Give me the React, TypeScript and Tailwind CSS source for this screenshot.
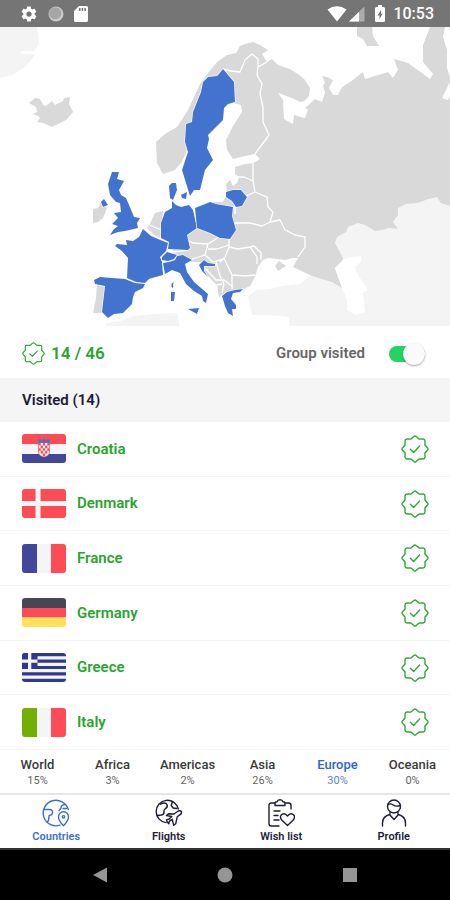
import { ReactNode, useState } from "react";

interface ICountry {
  name: string;
  flag: ReactNode;
}

interface IContinent {
  name: string;
  percent: number;
}

interface INavItem {
  label: string;
  icon: ReactNode;
}

/** flags are drawn on a 44x29 canvas */
const COUNTRIES: ICountry[] = [
  {
    name: "Croatia",
    flag: (
      <>
        <path fill="#ff4b55" d="M0 0h44v10H0z" />
        <path fill="#f5f5f5" d="M0 10h44v10H0z" />
        <path fill="#41479b" d="M0 20h44v9H0z" />
        <path fill="#f5f5f5" d="M16.500 8h11v10q0 4-5.500 5-5.500-1-5.500-5z" />
        <path
          fill="#ff4b55"
          d="M16.500 9h2.200v2.600h-2.200zM20.900 9h2.200v2.600h-2.200zM25.300 9h2.200v2.600h-2.200zM18.700 11.600h2.200v2.600h-2.200zM23.100 11.600h2.200v2.600h-2.200zM16.500 14.200h2.200v2.600h-2.200zM20.900 14.200h2.200v2.600h-2.200zM25.300 14.200h2.200v2.600h-2.200zM18.700 16.800h2.200v2.600h-2.200zM23.100 16.800h2.200v2.600h-2.200zM20.900 19.400h2.200V22h-2.200z"
        />
        <path
          fill="none"
          stroke="#ff4b55"
          strokeWidth=".7"
          d="M16.500 8v10q0 4 5.500 5 5.500-1 5.500-5V8"
        />
        <path fill="#5b6fb5" d="M15.500 6l2.500-1 2 1 2-1.200L24 6l2-1 2.500 1-.8 3H16.300z" />
      </>
    ),
  },
  {
    name: "Denmark",
    flag: (
      <>
        <path fill="#ff4b55" d="M0 0h44v29H0z" />
        <path fill="#f5f5f5" d="M13.500 0h5v12H44v5H18.500v12h-5V17H0v-5h13.500z" />
      </>
    ),
  },
  {
    name: "France",
    flag: (
      <>
        <path fill="#41479b" d="M0 0h15v29H0z" />
        <path fill="#f5f5f5" d="M15 0h14v29H15z" />
        <path fill="#ff4b55" d="M29 0h15v29H29z" />
      </>
    ),
  },
  {
    name: "Germany",
    flag: (
      <>
        <path fill="#464655" d="M0 0h44v10H0z" />
        <path fill="#ff4b55" d="M0 10h44v9.500H0z" />
        <path fill="#ffe15a" d="M0 19.500h44V29H0z" />
      </>
    ),
  },
  {
    name: "Greece",
    flag: (
      <>
        <path fill="#f5f5f5" d="M0 0h44v29H0z" />
        <path
          fill="#30388f"
          d="M0 0h44v3.200H0zM0 6.400h44v3.300H0zM0 12.900h44v3.200H0zM0 19.300h44v3.200H0zM0 25.800h44V29H0z"
        />
        <path fill="#30388f" d="M0 0h15.500v16.100H0z" />
        <path fill="#f5f5f5" d="M6 0h3.300v6.400h6.200v3.300H9.300v6.400H6V9.700H0V6.400h6z" />
      </>
    ),
  },
  {
    name: "Italy",
    flag: (
      <>
        <path fill="#73af00" d="M0 0h15v29H0z" />
        <path fill="#f5f5f5" d="M15 0h14v29H15z" />
        <path fill="#ff4b55" d="M29 0h15v29H29z" />
      </>
    ),
  },
];

const CONTINENTS: IContinent[] = [
  { name: "World", percent: 15 },
  { name: "Africa", percent: 3 },
  { name: "Americas", percent: 2 },
  { name: "Asia", percent: 26 },
  { name: "Europe", percent: 30 },
  { name: "Oceania", percent: 0 },
];

const NAV_ITEMS: INavItem[] = [
  {
    label: "Countries",
    icon: (
      <>
        <path d="M26.300 10.500A12.800 12.800 0 1 0 18 26.200M23.500 5.600a12.800 12.800 0 0 1 2.300 3.400" />
        <path d="M2 10.500h5.500q3.500.2 3 3.500-.4 2-2.500 2.300-1.500.4-1.200 2.200.4 3.200-1.800 4.500" />
        <path d="M23 5.500q-4 .2-4 3.500l-2 2.500M21 9.500h3.500" />
        <path d="M21.500 26.800q-5-5-5-9a5 5 0 0 1 10 0q0 4-5 9z" />
        <circle cx="21.500" cy="17.800" r="1.200" />
      </>
    ),
  },
  {
    label: "Flights",
    icon: (
      <>
        <path d="M11 23.600A11.200 11.200 0 1 1 23.300 10" />
        <path d="M5.500 5.200q5-2.500 6.500.3 1.200 2.500-2 4.500-1.500 1-1 3 .3 2.500-2.500 3l-4.300.5M17.500 2.500l-1.300 4 2 2.500 3.500.5" />
        <path d="M11.500 16.500l2-1.800 5.500.3 4.300-3q2.500-.6 3.200.6.500 1.700-1.500 3l-2.800 2.200-1.500 7-2 1.500-1.500-6-3 2-.3 2.500-1.500-1.500-1-2.500 2.800-.8 2.600-2.500z" />
      </>
    ),
  },
  {
    label: "Wish list",
    icon: (
      <>
        <path d="M8 4H4.500Q2 4 2 6.500v18Q2 27 4.500 27H12M18 4h3.500Q24 4 24 6.500V10" />
        <path d="M8 6.500V4q0-1.200 2-1.200.5-2 3-2t3 2q2 0 2 1.200v2.500z" />
        <path d="M7 12h6M7 16.500h4M7 21h5" />
        <path d="M20.500 26.500l-6-5.700q-2.200-3 .2-5.300 3.200-2 5.800 1.500 2.600-3.500 5.800-1.500 2.400 2.300.2 5.300z" />
      </>
    ),
  },
  {
    label: "Profile",
    icon: (
      <>
        <circle cx="14" cy="7.500" r="6.500" />
        <path d="M7.700 5.500q3-1.500 5.500.5 3 2 7.200.5" />
        <path d="M2.500 27v-3q0-6.500 7-8.500l4.500 5 4.500-5q7 2 7 8.500v3M10 16v-2.500M18 16v-2.500" />
      </>
    ),
  },
];

interface IBadgeProps {
  className: string;
}

const VisitedBadge = ({ className }: IBadgeProps) => (
  <svg
    viewBox="0 0 24 24"
    fill="none"
    stroke="currentColor"
    strokeWidth="1.200"
    strokeLinecap="round"
    strokeLinejoin="round"
    className={className}
    aria-hidden="true"
  >
    <path d="M8.500 3.500L11.100 1.200Q12 .5 12.900 1.200L15.500 3.500 18.900 3.400Q20.500 3.500 20.600 5.100L20.500 8.500 22.800 11.100Q23.500 12 22.800 12.900L20.500 15.500 20.600 18.900Q20.500 20.500 18.900 20.600L15.500 20.500 12.900 22.800Q12 23.500 11.100 22.800L8.500 20.500 5.100 20.600Q3.500 20.500 3.400 18.900L3.500 15.500 1.200 12.900Q.5 12 1.200 11.100L3.500 8.500 3.400 5.100Q3.500 3.500 5.100 3.400z" />
    <path d="M8 12.300l2.800 2.700L16 9.500" />
  </svg>
);

const StatusBar = () => (
  <header className="flex h-[27px] items-center justify-between bg-[#757575] pl-5 pr-4 text-white">
    <div className="flex items-center gap-2.5">
      <svg viewBox="0 0 24 24" className="size-[18px]" fill="currentColor">
        <path d="M19.400 13c.1-.3.100-.6.100-1s0-.7-.1-1l2.100-1.700c.2-.1.200-.4.100-.6l-2-3.500c-.1-.2-.4-.3-.6-.2l-2.500 1c-.5-.4-1.100-.7-1.700-1l-.4-2.600c0-.2-.2-.4-.5-.4h-4c-.2 0-.5.200-.5.400L9 5c-.6.300-1.200.600-1.700 1l-2.500-1c-.2-.1-.5 0-.6.200l-2 3.500c-.1.200-.1.500.1.600L4.500 11c0 .3-.1.700-.1 1s0 .7.100 1l-2.100 1.700c-.2.100-.2.400-.1.600l2 3.500c.1.200.4.300.6.200l2.500-1c.5.400 1.100.7 1.700 1l.4 2.600c0 .2.200.4.500.4h4c.2 0 .5-.2.500-.4l.4-2.600c.6-.3 1.200-.6 1.700-1l2.500 1c.2.100.5 0 .6-.2l2-3.500c.1-.2.100-.5-.1-.6zM12 15.500a3.500 3.500 0 1 1 0-7 3.500 3.500 0 0 1 0 7z" />
      </svg>
      <svg viewBox="0 0 16 16" className="size-4">
        <circle cx="8" cy="8" r="7.500" fill="#c9c9c9" />
        <circle cx="7.200" cy="7.200" r="6" fill="#a6a6a6" />
      </svg>
      <svg viewBox="0 0 14 16" className="h-4 w-3.5" fill="currentColor">
        <path
          fillRule="evenodd"
          d="M5 0h7.500Q14 0 14 1.500v13q0 1.500-1.500 1.500h-11Q0 16 0 14.500V5zM5 2v3h1.500V2zm2.700 0v3h1.500V2zm2.700 0v3h1.500V2z"
        />
      </svg>
    </div>
    <div className="flex items-center">
      <svg viewBox="0 0 20 16" className="h-4 w-5" fill="currentColor">
        <path d="M10 15.500L.5 3.500Q10-3 19.500 3.500z" />
      </svg>
      <svg viewBox="0 0 16 16" className="ml-0.5 size-4" fill="currentColor">
        <path opacity=".4" d="M15.500.5v15H0z" />
        <path d="M10 6v9.500H0z" />
      </svg>
      <svg viewBox="0 0 10 17" className="ml-2.5 h-[17px] w-2.5" fill="currentColor">
        <path
          fillRule="evenodd"
          d="M3 0h4v2h1.500Q10 2 10 3.500v12Q10 17 8.500 17h-7Q0 17 0 15.500v-12Q0 2 1.500 2H3zM6 5L2.500 10.500h2V14L7.700 8.700H6z"
        />
      </svg>
      <span className="ml-2 text-base font-medium">10:53</span>
    </div>
  </header>
);

const EuropeMap = () => (
  <svg
    viewBox="0 27 450 300"
    className="block h-auto w-full"
    role="img"
    aria-label="Visited countries in Europe"
  >
    {/* land outside of the continent */}
    <g fill="#f4f4f4">
      <path d="M0 27H37L39 43 34 51 21 51V54H36L25 67 12 75 0 78z" />
      <path d="M106 323L120 321 133 316 155 314 177 313 180 326H106z" />
      <path d="M248 297L256 290 270 289 282 286 300 284 312 274 335 240 345 222 390 215 400 200 450 190V326H289V317L270 315 252 315z" />
    </g>

    {/* mainland */}
    <g fill="#d9d9d9">
      <path d="M156 142L165 134 177 127 188 110 200 84 208 73 217 62 227 55 236 53 240 46 245 44 253 42 260 45 268 50 262 54 267 62 272 59 278 65 290 69 298 74 305 80 310 88 309 96 304 101 300 102 292 98 278 93 283 100 284 119 293 124 294 115 305 118 308 110 305 108 315 99 322 102 325 93 323 86 325 82 322 76 327 77 333 80 329 88 333 95 338 95 342 87 350 82 363 72 365 79 385 73 388 72 393 78 398 70 394 59 408 63 430 79 433 74 423 62 423 45 430 27H445L443 37 447 50 447 68 450 78V82L442 98 448 100 450 97V206L441 203 437 197 428 199 418 203 406 204 398 208 398 215 393 222 398 229 388 228 382 230 375 231 365 225 358 223 348 227 346 232 337 237 335 243 343 258 342 262 335 268 338 277 342 288 332 282 312 276 293 267 298 258 292 258 286 260 277 259 268 258 263 260 258 267 255 277 250 286 242 290 222 295 219 297 217 285 204 272 200 262 190 262 173 255 173 240 187 230 197 228 195 208 210 202 223 202 227 192 226 184 230 180 233 186 237 183 239 177 235 174 235 167 245 164 253 163 260 159 255 154 245 156 233 159 227 150 226 140 233 126 242 112 241 105 233 103 215 110 187 150 182 162 175 170 163 174 157 163z" />
      <path d="M29 103L35 98 40 99 43 105 46 106 52 101 55 105 63 101 64 98 70 97 69 104 73 112 66 120 52 127 43 123 37 122 40 118 38 116 33 114 37 112 36 107z" />
      <path d="M357 27H372L373 36 379 46 367 46 363 39 357 36z" />
      <path d="M275 266L279 261 286 266 278 271z" />
      <path d="M93 209L98 208 101 202 107 208 103 218 98 222 93 223z" />
      <path d="M163 211L155 213 150 224 147 228 153 234 158 237 161 238 162 226z" />
      <path d="M97 284L105 287 103 313H93L96 298z" />
    </g>

    {/* Adriatic and Caspian Sea */}
    <path
      fill="#fff"
      d="M343 260L350 257 361 256 362 261 355 267 357 273 363 283 368 290 363 293 365 312 356 315 347 310 347 300 342 288 335 268zM166 268L176 265 187 274 204 292 198 298 176 282z"
    />

    {/* borders */}
    <path
      fill="none"
      stroke="#fff"
      strokeWidth="1.300"
      strokeLinejoin="round"
      d="M223 69L231 71 240 72 245 60 252 54 258 59 258 67 267 62M258 67L257 75 262 84 260 94 263 107 263 122 269 135 255 154M253 163V174L253 181 255 192 246 196M238 177L244 177 253 181M255 192L267 197 268 207 273 212 270 222 262 226 250 223 235 223M270 222L280 220 285 230 295 235 305 237 305 247 298 257M235 230L229 240V247L238 249 250 247 257 257 257 264M250 247L254 246 261 253 261 260M229 247L225 257 220 262M224 258L232 275 245 276 255 275M232 275V289M187 240L193 243 208 244 219 237M208 244L205 255 192 259M208 249L217 249 229 245M204 254L213 262 223 259M190 249L182 251 172 252M216 262L220 276 224 284 222 293M205 268L216 280 224 280 233 287M217 285L222 284M150 225L161 230M235 206V214"
    />

    {/* visited countries */}
    <g fill="#4273cf" stroke="#fff" strokeWidth="1.200" strokeLinejoin="round" paintOrder="stroke">
      <path d="M223 69L229 76 234 82 235 102 228 104 224 108 223 120 215 128 208 135 209 139 207 148 213 160 205 170 200 190 194 190 190 196 182 170 188 152 185 142 186 124 192 122 193 112 201 92 203 82 208 77 217 76 219 74z" />
      <path d="M112 172H119L117 179 124 181 119 190 121 195 126 198 132 212 134 217 140 218 137 223 138 228 125 231 118 232 110 235 114 229 118 226 112 224 118 218 114 213 121 212 120 203 116 202 110 195 108 184z" />
      <path d="M101 202L104 199 108 205 103 207z" />
      <path d="M143 229L151 236 158 239 168 243 166 251 160 257 162 262 163 275 152 278 149 279 145 283 136 282 127 278 128 258 122 251 115 246 117 244 127 245 126 240 133 241 139 237z" />
      <path d="M94 280L100 277 112 278 125 279 135 283 145 284 143 288 135 292 133 297 132 304 123 313 114 314 108 318 102 312 105 286 95 284z" />
      <path d="M172 201L176 205 181 207 189 205 193 210 197 228 187 235 190 248 188 250 168 249 169 242 161 238 161 223 165 212 172 208z" />
      <path d="M169 186L172 183 176 183 177 190 173 200 170 198z" />
      <path d="M181 195L187 192 186 199 182 198z" />
      <path d="M195 208L210 202 216 204 233 207 232 216 236 230 230 239 220 238 210 233 197 228z" />
      <path d="M226 192L233 190 241 190 247 197 242 206 236 207 232 201 226 197z" />
      <path d="M162 257L167 252 177 255 174 259 168 261 162 260z" />
      <path d="M163 263L169 262 175 260 177 256 183 255 192 260 185 264 187 272 194 282 201 288 208 294 206 303 203 301 202 296 194 291 186 284 180 273 172 270 165 274z" />
      <path d="M188 309L199 308 197 314z" />
      <path d="M171 292L175 292 174 301H171z" />
      <path d="M171.500 284L173.500 282 173 288 171.500 287z" />
      <path d="M199 265L204 260 208 263 215 264V266L204 266 204 271 208 277 202 271z" />
      <path d="M222 296L227 292 235 290 243 289 240 292 233 293 231 299 236 305 236 309 232 309 233 316 228 313 225 306z" />
    </g>
  </svg>
);

const CountryRow = ({ name, flag }: ICountry) => (
  <li className="flex flex-1 items-center border-b border-[#f4f4f4] pl-[22px] pr-[21px]">
    <svg viewBox="0 0 44 29" className="h-[29px] w-11 rounded-[3px]" aria-hidden="true">
      {flag}
    </svg>
    <span className="ml-[11px] flex-1 text-[15px] font-semibold text-[#27a52e]">
      {name}
    </span>
    <button type="button" aria-label={`${name} visited`} className="text-[#2fa836]">
      <VisitedBadge className="size-7" />
    </button>
  </li>
);

const App = () => {
  const [grouped, setGrouped] = useState(true);
  const [continent, setContinent] = useState("Europe");

  /**render countries list */
  const renderCountries = COUNTRIES.map((country) => (
    <CountryRow key={country.name} {...country} />
  ));

  /**render continent tabs */
  const renderContinents = CONTINENTS.map(({ name, percent }) => (
    <button
      key={name}
      type="button"
      onClick={() => setContinent(name)}
      className={`flex flex-1 flex-col items-center ${
        name === continent ? "text-[#2c66cf]" : "text-[#3a3a3a]"
      }`}
    >
      <span className="text-[13px] leading-4 font-medium">{name}</span>
      <span className="text-[11px] leading-4 opacity-80">{percent}%</span>
    </button>
  ));

  /**render bottom navigation */
  const renderNav = NAV_ITEMS.map(({ label, icon }, index) => (
    <a
      key={label}
      href="#"
      className={`flex flex-1 flex-col items-center gap-0.5 ${
        index === 0 ? "text-[#3b6fd4]" : "text-[#1c1b3a]"
      }`}
    >
      <svg
        viewBox="0 0 28 28"
        className="size-7"
        fill="none"
        stroke="currentColor"
        strokeWidth="1.400"
        strokeLinecap="round"
        strokeLinejoin="round"
        aria-hidden="true"
      >
        {icon}
      </svg>
      <span className="text-[11px] leading-4 font-semibold">{label}</span>
    </a>
  ));

  return (
    <div className="flex min-h-screen flex-col bg-white font-[Roboto,sans-serif]">
      <StatusBar />

      <main className="flex flex-1 flex-col">
        <EuropeMap />

        <div className="flex h-[51px] items-center justify-between pl-[22px] pr-[25px] pt-0.5">
          <div className="flex items-center gap-1.5 text-[#27a52e]">
            <VisitedBadge className="size-[23px]" />
            <span className="text-[17px] font-semibold">14 / 46</span>
          </div>
          <label className="flex cursor-pointer items-center gap-6 text-[15px] font-semibold text-[#666]">
            Group visited
            <input
              type="checkbox"
              className="peer sr-only"
              checked={grouped}
              onChange={() => setGrouped(!grouped)}
            />
            <span className="flex h-4 w-9 items-center rounded-full bg-gray-300 peer-checked:justify-end peer-checked:bg-[#22d562]">
              <span className="size-[22px] rounded-full bg-[#fafafa] shadow-[0_1px_2px_rgba(0,0,0,0.35)]" />
            </span>
          </label>
        </div>

        <h2 className="flex h-11 items-center bg-[#f5f5f5] px-[22px] text-[15px] font-semibold text-[#1c1b33]">
          Visited (14)
        </h2>

        <ul className="flex flex-1 flex-col">{renderCountries}</ul>
      </main>

      <div className="flex h-[45px] items-center border-b-2 border-[#e6e6e6] pt-0.5">
        {renderContinents}
      </div>

      <nav className="flex h-[53px] items-center">{renderNav}</nav>

      <footer className="flex h-[52px] items-center justify-center gap-[109px] border-t-2 border-[#333] bg-black text-[#959595]">
        <button type="button" aria-label="Back">
          <svg viewBox="0 0 16 16" className="size-4" fill="currentColor">
            <path d="M15 .5v15L1 8z" />
          </svg>
        </button>
        <button type="button" aria-label="Home">
          <svg viewBox="0 0 16 16" className="size-4" fill="currentColor">
            <circle cx="8" cy="8" r="7.500" />
          </svg>
        </button>
        <button type="button" aria-label="Recent apps">
          <svg viewBox="0 0 16 16" className="size-4" fill="currentColor">
            <path d="M1 1h14v14H1z" />
          </svg>
        </button>
      </footer>
    </div>
  );
};

export default App;
